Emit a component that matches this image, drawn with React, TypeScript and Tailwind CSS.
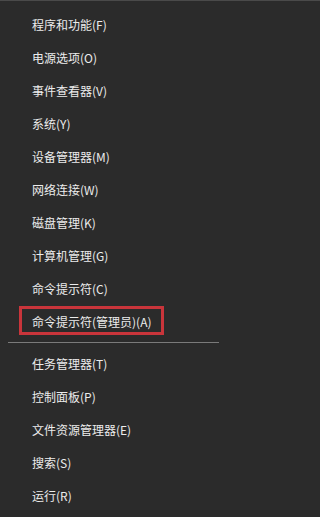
const groupA = [
  "程序和功能(F)",
  "电源选项(O)",
  "事件查看器(V)",
  "系统(Y)",
  "设备管理器(M)",
  "网络连接(W)",
  "磁盘管理(K)",
  "计算机管理(G)",
  "命令提示符(C)",
  "命令提示符(管理员)(A)",
];

const groupB = ["任务管理器(T)", "控制面板(P)", "文件资源管理器(E)", "搜索(S)", "运行(R)"];

function Item({ label, marked }: { label: string; marked?: boolean }) {
  return (
    <div className="relative flex h-[33px] items-center pl-8 text-[12px] text-[#ececec]">
      <span className="leading-none">{label}</span>
      {marked && (
        <span className="pointer-events-none absolute left-[19px] top-[1px] h-[29px] w-[145px] border-[3px] border-[#c9353b]" />
      )}
    </div>
  );
}

export default function App() {
  return (
    <div
      className="flex min-h-screen w-full flex-col border-t border-[#4a4a4a] bg-[#2b2b2b] pt-[7px]"
      style={{ fontFamily: '"Noto Sans CJK SC", "Noto Sans", sans-serif' }}
    >
      {groupA.map((label, i) => (
        <Item key={label} label={label} marked={i === groupA.length - 1} />
      ))}
      <div className="my-[4px] ml-2 h-px w-[211px] bg-[#7a7a7a]" />
      {groupB.map((label) => (
        <Item key={label} label={label} />
      ))}
    </div>
  );
}
